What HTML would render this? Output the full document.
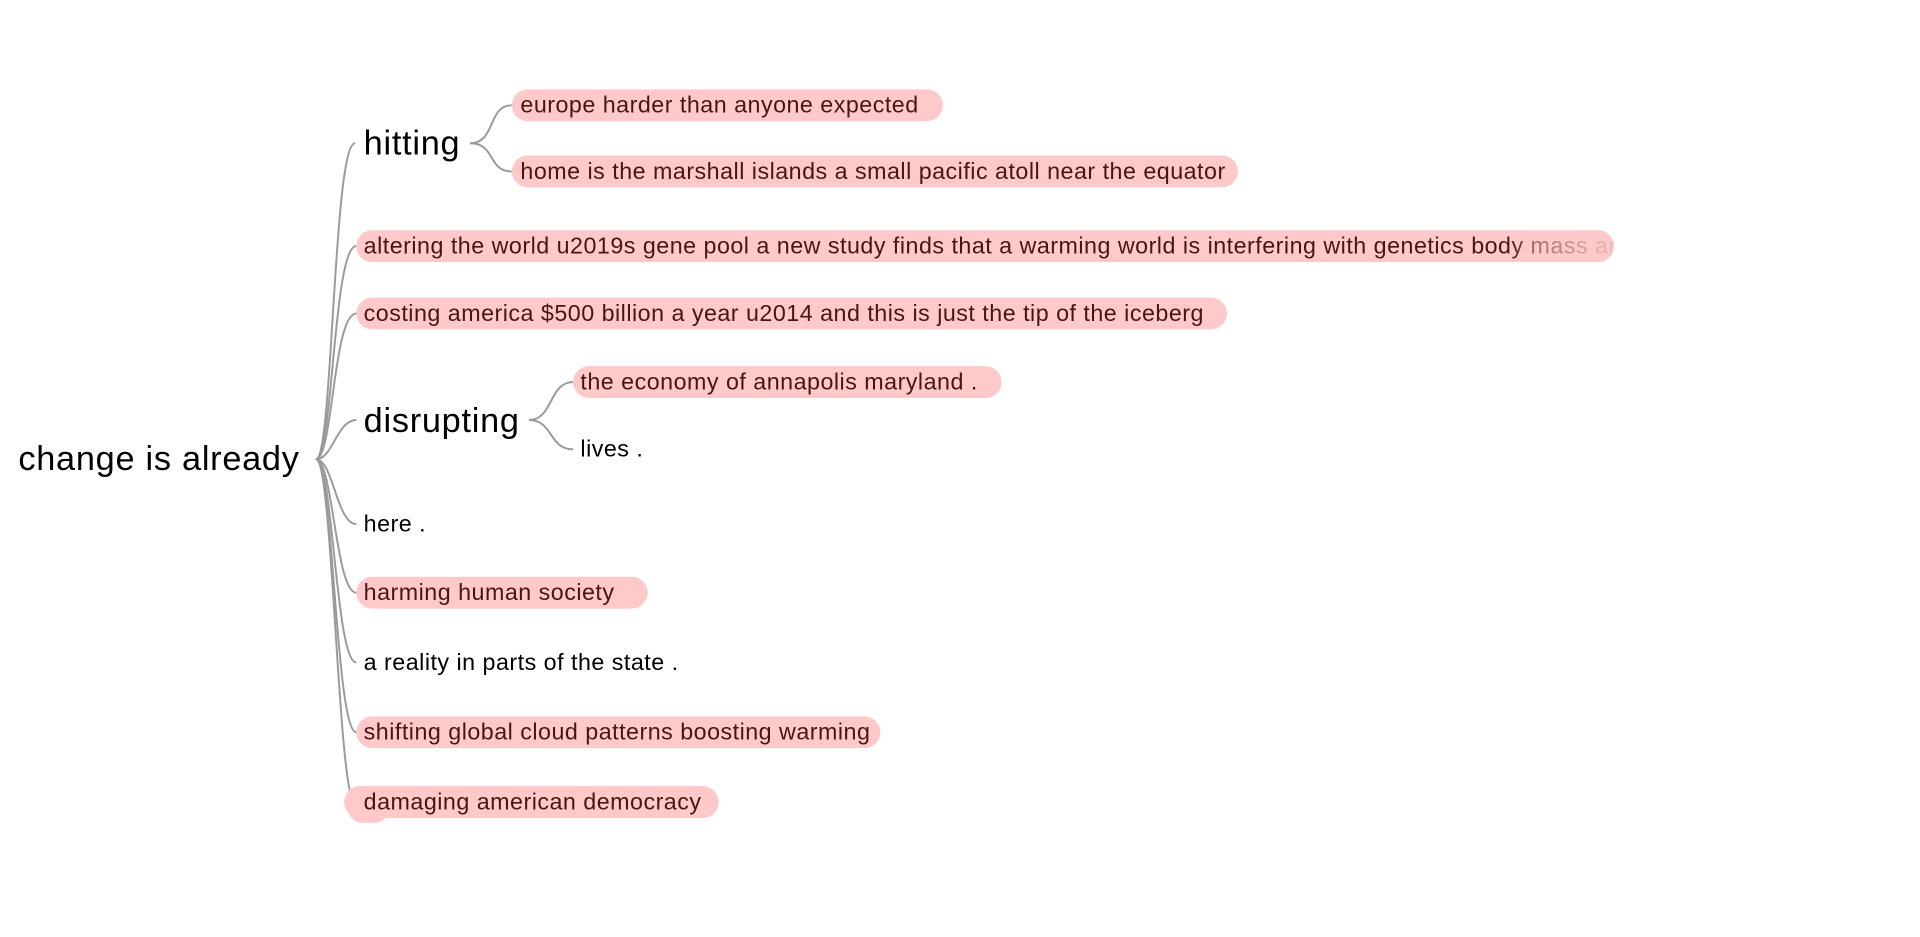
<!DOCTYPE html>
<html><head><meta charset="utf-8"><style>
html,body{margin:0;padding:0;background:#fff;width:1920px;height:937px;overflow:hidden}
#s{position:absolute;left:0;top:0;width:1568px;height:765px;transform:scale(1.2245);transform-origin:0 0;font-family:"Liberation Sans",sans-serif}
.t{position:absolute;white-space:nowrap;line-height:26px;font-size:19px;letter-spacing:0.4px;color:#000;padding-top:1px}
.p{position:absolute;height:26px;border-radius:13px;background:#ffc9c9}
.r{color:#4a1414}
.big{font-size:28px;line-height:32px;letter-spacing:0.6px}
</style></head><body><div id="s">
<svg width="1568" height="765" style="position:absolute;left:0;top:0" fill="none" stroke="#9a9a9a">
<g stroke-width="1.6">
<path d="M258 375 C272 375 272 117 290 117"/>
<path d="M258 375 C272 375 272 201 291 201"/>
<path d="M258 375 C272 375 272 256 291 256"/>
<path d="M258 375 C272 375 275 343 291 343"/>
<path d="M258 375 C272 375 275 428 291 428"/>
<path d="M258 375 C272 375 274 484 291 484"/>
<path d="M258 375 C272 375 274 541 291 541"/>
<path d="M258 375 C272 375 274 598 291 598"/>
<path d="M258 375 C272 375 276 655 290 655"/>
<path d="M384 117 C405 117 398 86 418 86"/>
<path d="M384 117 C405 117 398 140 418 140"/>
<path d="M432 343 C452 343 448 312 468 312"/>
<path d="M432 343 C452 343 448 367 468 367"/>
</g></svg>
<div class="t big" style="left:15px;top:358px">change is already</div>
<div class="t big" style="left:297px;top:100px">hitting</div>
<div class="t big" style="left:297px;top:327px">disrupting</div>
<div class="p" style="left:418px;top:73px;width:352px"></div>
<div class="t r" style="left:425px;top:73px">europe harder than anyone expected</div>
<div class="p" style="left:418px;top:127px;width:593px"></div>
<div class="t r" style="left:425px;top:127px">home is the marshall islands a small pacific atoll near the equator</div>
<div class="p" style="left:291px;top:188px;width:1027px;overflow:hidden"><div class="t r" style="left:6px;top:0">altering the world u2019s gene pool a new study finds that a warming world is interfering with genetics body mass and</div><div style="position:absolute;left:940px;top:0;width:90px;height:26px;background:linear-gradient(90deg,rgba(255,201,201,0),rgba(255,201,201,.5) 25%,rgba(255,201,201,.95))"></div></div>
<div class="p" style="left:291px;top:243px;width:711px"></div>
<div class="t r" style="left:297px;top:243px">costing america $500 billion a year u2014 and this is just the tip of the iceberg</div>
<div class="p" style="left:468px;top:299px;width:350px"></div>
<div class="t r" style="left:474px;top:299px">the economy of annapolis maryland .</div>
<div class="t" style="left:474px;top:354px">lives .</div>
<div class="t" style="left:297px;top:415px">here .</div>
<div class="p" style="left:291px;top:471px;width:238px"></div>
<div class="t r" style="left:297px;top:471px">harming human society</div>
<div class="t" style="left:297px;top:528px">a reality in parts of the state .</div>
<div class="p" style="left:291px;top:585px;width:428px"></div>
<div class="t r" style="left:297px;top:585px">shifting global cloud patterns boosting warming</div>
<div class="p" style="left:281px;top:642px;width:306px"></div>
<div class="p" style="left:284px;top:648px;width:34px;height:24px;border-radius:12px"></div>
<div class="t r" style="left:297px;top:642px">damaging american democracy</div>
</div></body></html>
